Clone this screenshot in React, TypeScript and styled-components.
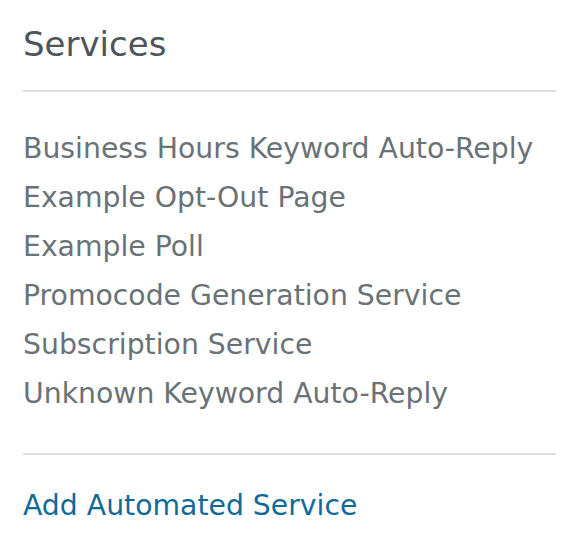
import styled, { createGlobalStyle } from "styled-components"

const GlobalStyle = createGlobalStyle`
	body {
		margin: 0;
		background: #ffffff;
		font-family: "DejaVu Sans", Verdana, sans-serif;
	}
`

const Panel = styled.section`
	width: 533px;
	padding: 24px 0 0 23px;
`

const Title = styled.h2`
	margin: 0;
	font-size: 34px;
	font-weight: 400;
	line-height: 40px;
	color: #4d5559;
`

const Divider = styled.hr`
	border: none;
	height: 2px;
	background: #dcdedf;
	margin: ${p => p.$top}px 0 0;
`

const ServiceList = styled.ul`
	list-style: none;
	margin: 32px 0 35px;
	padding: 0;
`

const ServiceItem = styled.li`
	font-size: 28.3px;
	line-height: 49px;
	color: #6a7276;
`

const AddLink = styled.a`
	display: block;
	margin-top: 26px;
	font-size: 28.3px;
	line-height: 49px;
	color: #106a98;
	text-decoration: none;
`

const services = [
	"Business Hours Keyword Auto-Reply",
	"Example Opt-Out Page",
	"Example Poll",
	"Promocode Generation Service",
	"Subscription Service",
	"Unknown Keyword Auto-Reply",
]

export default function App() {
	return (
		<>
			<GlobalStyle />
			<Panel>
				<Title>Services</Title>
				<Divider $top={26} />
				<ServiceList>
					{services.map(name =>
						<ServiceItem key={name}>{name}</ServiceItem>
					)}
				</ServiceList>
				<Divider $top={0} />
				<AddLink href="#">Add Automated Service</AddLink>
			</Panel>
		</>
	)
}
